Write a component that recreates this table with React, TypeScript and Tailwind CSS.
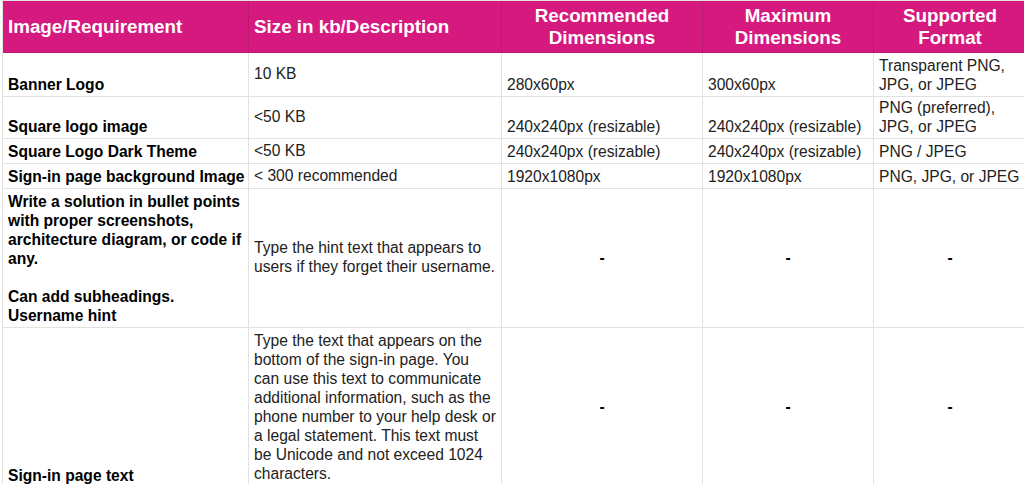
import type { ReactNode } from "react";

type Align = "bottom" | "middle";

function Head({ children, center }: { children: ReactNode; center?: boolean }) {
  return (
    <div
      className={`flex flex-col justify-center border-r border-b border-[#c0176f] bg-[#d6197f] px-[5px] text-[18.8px] leading-[22px] font-bold text-white ${
        center ? "items-center text-center" : ""
      }`}
    >
      <div>{children}</div>
    </div>
  );
}

function Cell({
  children,
  align = "bottom",
  bold,
  center,
}: {
  children?: ReactNode;
  align?: Align;
  bold?: boolean;
  center?: boolean;
}) {
  return (
    <div
      className={`flex flex-col overflow-hidden border-r border-b border-[#e2e2e2] bg-white px-[5px] pb-[2px] text-[15.6px] leading-[19px] ${
        align === "bottom" ? "justify-end" : "justify-center"
      } ${bold ? "font-bold text-black" : "text-[#222222]"} ${center ? "items-center text-center" : ""}`}
    >
      <div className="whitespace-nowrap">{children}</div>
    </div>
  );
}

function Dash() {
  return (
    <Cell align="middle" center>
      <span className="font-bold text-black">-</span>
    </Cell>
  );
}

export default function App() {
  return (
    <div className="h-[484px] w-[1024px] overflow-hidden bg-white font-['Liberation_Sans',Arial,sans-serif]">
      <div className="ml-[2px] grid w-max grid-cols-[246px_253px_201px_171px_153px] grid-rows-[52px_44px_42px_25px_25px_139px_160px] border-t border-l border-[#e2e2e2]">
        {/* header */}
        <Head>Image/Requirement</Head>
        <Head>Size in kb/Description</Head>
        <Head center>
          Recommended
          <br />
          Dimensions
        </Head>
        <Head center>
          Maximum
          <br />
          Dimensions
        </Head>
        <Head center>
          Supported
          <br />
          Format
        </Head>

        {/* banner logo */}
        <Cell bold>Banner Logo</Cell>
        <Cell align="middle">10 KB</Cell>
        <Cell>280x60px</Cell>
        <Cell>300x60px</Cell>
        <Cell>
          Transparent PNG,
          <br />
          JPG, or JPEG
        </Cell>

        {/* square logo */}
        <Cell bold>Square logo image</Cell>
        <Cell align="middle">&lt;50 KB</Cell>
        <Cell>240x240px (resizable)</Cell>
        <Cell>240x240px (resizable)</Cell>
        <Cell>
          PNG (preferred),
          <br />
          JPG, or JPEG
        </Cell>

        <Cell bold>Square Logo Dark Theme</Cell>
        <Cell align="middle">&lt;50 KB</Cell>
        <Cell>240x240px (resizable)</Cell>
        <Cell>240x240px (resizable)</Cell>
        <Cell>PNG / JPEG</Cell>

        <Cell bold>Sign-in page background Image</Cell>
        <Cell align="middle">&lt; 300 recommended</Cell>
        <Cell>1920x1080px</Cell>
        <Cell>1920x1080px</Cell>
        <Cell>PNG, JPG, or JPEG</Cell>

        {/* username hint */}
        <Cell bold>
          Write a solution in bullet points
          <br />
          with proper screenshots,
          <br />
          architecture diagram, or code if
          <br />
          any.
          <br />
          <br />
          Can add subheadings.
          <br />
          Username hint
        </Cell>
        <Cell align="middle">
          Type the hint text that appears to
          <br />
          users if they forget their username.
        </Cell>
        <Dash />
        <Dash />
        <Dash />

        {/* sign-in page text */}
        <Cell bold>Sign-in page text</Cell>
        <Cell align="middle">
          Type the text that appears on the
          <br />
          bottom of the sign-in page. You
          <br />
          can use this text to communicate
          <br />
          additional information, such as the
          <br />
          phone number to your help desk or
          <br />
          a legal statement. This text must
          <br />
          be Unicode and not exceed 1024
          <br />
          characters.
        </Cell>
        <Dash />
        <Dash />
        <Dash />
      </div>
    </div>
  );
}
